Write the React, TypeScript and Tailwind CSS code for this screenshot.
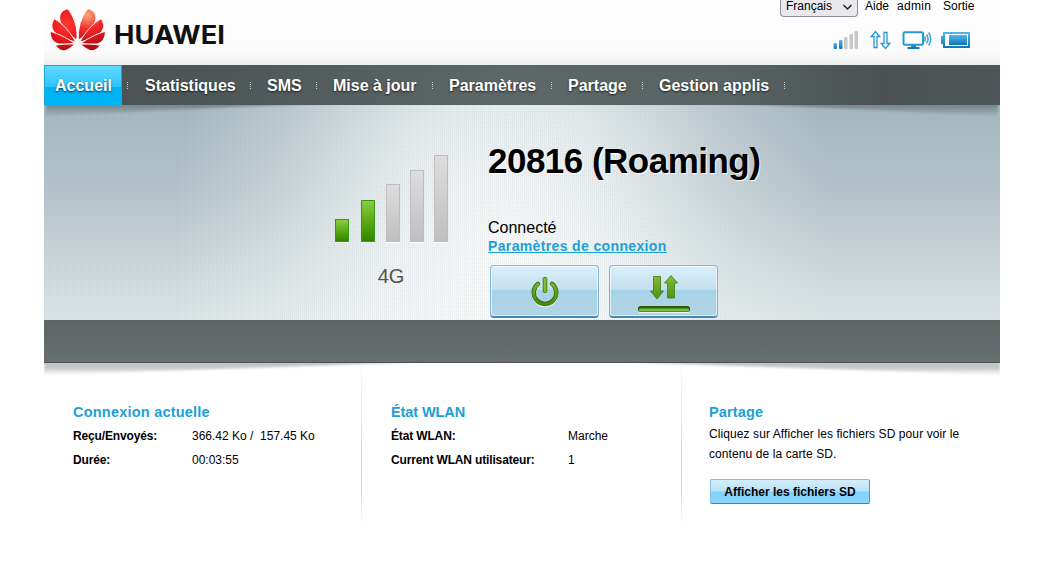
import { clsx } from "clsx";

const navItems = [
  { label: "Accueil", width: "w-[78px] pl-[10px]", active: true },
  { label: "Statistiques", width: "w-[128px] pl-[23px]" },
  { label: "SMS", width: "w-[66px] pl-[17px]" },
  { label: "Mise à jour", width: "w-[116px] pl-[17px]" },
  { label: "Paramètres", width: "w-[119px] pl-[17px]" },
  { label: "Partage", width: "w-[91px] pl-[17px]" },
  { label: "Gestion applis", width: "w-[142px] pl-[17px]" },
];

const LogoPetals = () => (
  <>
    <path d="M26.600 33C28.600 24 24 8 17.500 1.800C12 3.200 9.200 7 9.700 12C10.300 19 20 28 26.600 33Z" />
    <path d="M25.800 35C20.500 25.500 12 15.500 4.200 11.800C0.800 17 1.200 22.500 5.500 26.200C11 30.700 19 33.500 25.800 35Z" />
    <path d="M24.800 36.400C17 31 8 26.500 0.200 24.300C0 31 3.300 36 9 36.900C14 37.400 20 36.900 24.800 36.400Z" />
    <path d="M24.800 37.200C18 36.800 10 37.300 5.300 38.300C8.500 42.700 12.500 44.700 16 43.300C19 41.900 22.300 39.600 24.800 37.200Z" />
  </>
);

const Logo = () => (
  <svg width="180" height="46" viewBox="0 0 180 46" role="img" aria-label="HUAWEI">
    <defs>
      <radialGradient id="petal" gradientUnits="userSpaceOnUse" cx="17" cy="17" r="28">
        <stop offset="0" stopColor="#ff3a30" />
        <stop offset="0.5" stopColor="#f01c20" />
        <stop offset="1" stopColor="#a80c12" />
      </radialGradient>
      <radialGradient id="petalLight" gradientUnits="userSpaceOnUse" cx="18" cy="8" r="32">
        <stop offset="0" stopColor="#ffa877" />
        <stop offset="0.45" stopColor="#f5292a" />
        <stop offset="1" stopColor="#b00c12" />
      </radialGradient>
    </defs>
    <g fill="url(#petal)" stroke="#fff" strokeWidth="0.900">
      <LogoPetals />
    </g>
    <g fill="url(#petalLight)" stroke="#fff" strokeWidth="0.900" transform="translate(55.5 0) scale(-1 1)">
      <LogoPetals />
    </g>
    <text
      x="64"
      y="36.500"
      fontFamily="Inter, 'Liberation Sans', sans-serif"
      fontSize="25"
      fontWeight="700"
      fill="#111"
      textLength="111"
      lengthAdjust="spacingAndGlyphs"
    >
      HUAWEI
    </text>
  </svg>
);

// Small status icons on the right of the header
const StatusIcons = () => (
  <div className="flex h-[20px]">
    <svg width="26" height="20" className="mr-[11px]">
      <defs>
        <linearGradient id="blue" x1="0" y1="0" x2="0" y2="1">
          <stop offset="0" stopColor="#50b9ee" />
          <stop offset="1" stopColor="#1275b3" />
        </linearGradient>
      </defs>
      <rect x="0.500" y="13" width="3.500" height="6" rx="1" fill="url(#blue)" />
      <rect x="6" y="10" width="3.500" height="9" rx="1" fill="url(#blue)" />
      <rect x="11" y="7" width="3.500" height="12" rx="1" fill="#c8c8c8" />
      <rect x="16.500" y="4" width="3.500" height="15" rx="1" fill="#c8c8c8" />
      <rect x="21.500" y="1" width="3.500" height="18" rx="1" fill="#c8c8c8" />
    </svg>
    <svg width="21" height="20" className="mr-[11px]" fill="none" stroke="#2199d5" strokeWidth="1.300">
      <path d="M4 17.500V6.500H1.300L5.500 1.500L9.700 6.500H7V17.500Z" />
      <path d="M14 2.500V13.500H11.300L15.500 18.500L19.700 13.500H17V2.500Z" />
    </svg>
    <svg width="30" height="20" className="mr-[8px]">
      <rect x="1.500" y="2.200" width="19.500" height="12.600" rx="1.500" fill="#fff" stroke="#2697d3" strokeWidth="2" />
      <path d="M9 15.500H14V17H17.500V19H5.500V17H9Z" fill="#1779b5" />
      <path d="M22.500 6.500Q24 9 22.500 11.500M24.500 4.500Q27.500 9 24.500 13.500M26.700 2.500Q30.700 9 26.700 15.500" fill="none" stroke="#4aa8d8" strokeWidth="1.600" />
    </svg>
    <svg width="30" height="20">
      <path d="M3.500 2H29.500Q30 2 30 2.500V17.500Q30 18 29.500 18H3.500Q3 18 3 17.500V14H1.500Q1 14 1 13.500V6.500Q1 6 1.500 6H3V2.500Q3 2 3.500 2Z" fill="url(#blue)" />
      <rect x="5" y="4" width="23" height="12" fill="#fff" />
      <rect x="9" y="5" width="18" height="10" fill="url(#blue)" />
    </svg>
  </div>
);

const signalBars = [
  { size: "h-[23px] w-[14px] mr-[12px]", on: true },
  { size: "h-[42px] w-[14px] mr-[11px]", on: true },
  { size: "h-[58px] w-[14px] mr-[10px]", on: false },
  { size: "h-[72px] w-[14px] mr-[10px]", on: false },
  { size: "h-[87px] w-[14px]", on: false },
];

const PowerIcon = () => (
  <svg width="30" height="32" viewBox="0 0 30 32">
    <defs>
      <linearGradient id="green" gradientUnits="userSpaceOnUse" x1="0" y1="0" x2="0" y2="32">
        <stop offset="0" stopColor="#89bf3c" />
        <stop offset="1" stopColor="#3d8405" />
      </linearGradient>
    </defs>
    <path d="M8 8A11.300 11.300 0 1 0 22 8" fill="none" stroke="#edf6fa" strokeWidth="4" strokeLinecap="round" transform="translate(0 1)" />
    <path d="M8 7.800A11.300 11.300 0 1 0 22 7.800" fill="none" stroke="#306f09" strokeWidth="4.400" strokeLinecap="round" />
    <path d="M8 8.100A11.300 11.300 0 1 0 22 8.100" fill="none" stroke="url(#green)" strokeWidth="2.800" strokeLinecap="round" />
    <rect x="13.200" y="1.500" width="3.600" height="15" rx="1" fill="#82b93a" stroke="#3f850c" />
  </svg>
);

const TrafficIcon = () => (
  <svg width="54" height="40" viewBox="0 0 54 40">
    <g fill="url(#green)" stroke="#39800c" strokeWidth="0.800">
      <path d="M16.500 2.500H23.500V17H26.500L20 25L13.500 17H16.500Z" />
      <path d="M30.500 24V9H27.500L34 1.500L40.500 9H37.500V24Z" />
    </g>
    <rect x="1" y="33" width="52" height="6" rx="2.500" fill="#eaf5fa" />
    <rect x="1" y="32" width="52" height="6" rx="2.500" fill="#2e5d0c" />
    <rect x="2" y="34.500" width="50" height="3" rx="1.500" fill="#78c240" />
  </svg>
);

const bigButton =
  "flex justify-center h-[53px] w-[109px] rounded-[4px] border border-[#83b6d9] border-b-2 border-b-[#4389bd] bg-[linear-gradient(to_bottom,#d9effb_0%,#c5deed_48%,#a6d3e9_49%,#b3d4e3_100%)] shadow-[inset_0_0_0_1px_rgba(255,255,255,0.6)]";

const Row = ({ label, value, labelWidth }: { label: string; value: string; labelWidth: string }) => (
  <div className="flex h-[24px] items-center whitespace-pre">
    <div className={clsx("shrink-0 font-bold tracking-[-0.150px]", labelWidth)}>{label}</div>
    <div>{value}</div>
  </div>
);

const Divider = () => (
  <div className="h-[160px] w-px shrink-0 bg-[linear-gradient(to_bottom,#f8f8f8,#dcdcdc_50%,#d8d8d8_80%,#fff)]" />
);

const App = () => {
  return (
    <div className="h-[570px] overflow-hidden bg-white font-['Liberation_Sans',Arial,sans-serif] text-black">
      <div className="ml-[44px] w-[956px]">
        {/* Header */}
        <header className="flex h-[65px] justify-between bg-[linear-gradient(to_bottom,#fff_0%,#fbfbfb_80%,#eeeeee_100%)]">
          <div className="pl-[5.500px] pt-[7px]">
            <Logo />
          </div>
          <div className="flex w-[220px] flex-col">
            <div className="flex h-[17px] text-[12px] leading-[13px]">
              <button className="mr-[7px] flex h-[17px] w-[78px] rounded-b-[4px] border border-t-0 border-[#8f8f9d] bg-[#e9e9ed] pl-[5px]">
                <span className="w-[57px] text-left">Français</span>
                <svg width="9" height="14" fill="none" stroke="#222" strokeWidth="1.500">
                  <path d="M0.500 5L4.500 9L8.500 5" />
                </svg>
              </button>
              <a className="w-[32px]">Aide</a>
              <a className="w-[46px] tracking-[0.300px]">admin</a>
              <a>Sortie</a>
            </div>
            <div className="pl-[53px] pt-[13px]">
              <StatusIcons />
            </div>
          </div>
        </header>

        {/* Navigation */}
        <nav className="flex h-[40px] bg-[linear-gradient(to_right,#4c5254_0%,#4d5557_15%,#5d6767_48%,#586363_72%,#4b5152_88%,#4e5658_100%)] text-[16px] font-bold text-white">
          {navItems.map((item) => (
            <div key={item.label} className="flex items-center">
              <a
                className={clsx(
                  "flex h-[40px] items-center whitespace-nowrap [text-shadow:0_1px_2px_rgba(0,0,0,0.7)]",
                  item.width,
                  item.active
                    ? "border border-b-0 border-[#1aa5d9] bg-[linear-gradient(to_bottom,#60d8ff_0%,#2fc4fb_53%,#00b1f5_54%,#00b5f9_100%)]"
                    : "pt-px"
                )}
              >
                {item.label}
              </a>
              {item.active ? (
                <span className="-mr-[6px] ml-[5px] h-[7px] w-px bg-[repeating-linear-gradient(to_bottom,#ccd0d0_0_1px,transparent_1px_2px)]" />
              ) : (
                <span className="-mr-px h-[7px] w-px bg-[repeating-linear-gradient(to_bottom,#ccd0d0_0_1px,transparent_1px_2px)]" />
              )}
            </div>
          ))}
        </nav>

        {/* Connection status */}
        <section className="relative flex h-[215px] bg-[radial-gradient(ellipse_330px_480px_at_48%_70%,rgba(255,255,255,0.95)_0%,rgba(255,255,255,0.74)_35%,rgba(255,255,255,0.25)_72%,transparent_100%),linear-gradient(to_bottom,#a7bbc1_0%,#b7c7cc_40%,#e1e8ea_100%)]">
          <div className="absolute inset-0 bg-[repeating-linear-gradient(to_right,rgba(70,100,110,0.045)_0_1px,transparent_1px_2px),repeating-linear-gradient(to_bottom,rgba(70,100,110,0.045)_0_1px,transparent_1px_2px)]" />
          <svg className="absolute left-0 top-0" width="956" height="14">
            <defs>
              <linearGradient id="drop" x1="0" y1="0" x2="0" y2="1">
                <stop offset="0" stopColor="#3c4648" stopOpacity="0.500" />
                <stop offset="1" stopColor="#3c4648" stopOpacity="0.050" />
              </linearGradient>
              <filter id="soft" x="-5%" y="-20%" width="110%" height="140%">
                <feGaussianBlur stdDeviation="1" />
              </filter>
            </defs>
            <path d="M2 -2H280L2 11ZM954 -2H676L954 11Z" fill="url(#drop)" filter="url(#soft)" />
          </svg>
          <div className="relative ml-[291px] w-[153px]">
            <div className="flex h-[137px] items-end">
              {signalBars.map((bar, i) => (
                <div
                  key={i}
                  className={clsx(
                    "border shadow-[0_1px_0_#fff]",
                    bar.size,
                    bar.on
                      ? "border-[#36961b] bg-[linear-gradient(to_bottom,#8bcb40,#429600_80%,#328200)]"
                      : "border-[#bdbdbd] bg-[linear-gradient(to_bottom,#dddddd,#bfbfbf)]"
                  )}
                />
              ))}
            </div>
            <div className="w-[112px] pt-[22px] text-center text-[20px] leading-[24px] text-[#555]">4G</div>
          </div>
          <div className="relative">
            <h1 className="pt-[35px] text-[35px] font-bold leading-[42px] tracking-[-0.520px] [text-shadow:1px_1px_1px_#fff]">
              20816 (Roaming)
            </h1>
            <div className="pt-[36px] text-[16px] leading-[19px]">Connecté</div>
            <a className="block text-[14px] font-bold leading-[18px] tracking-[0.360px] text-[#1ba1d6] underline">
              Paramètres de connexion
            </a>
            <div className="flex gap-[10px] pl-[2px] pt-[10px]">
              <button className={clsx(bigButton, "pt-[10px]")}>
                <PowerIcon />
              </button>
              <button className={clsx(bigButton, "pt-[8px]")}>
                <TrafficIcon />
              </button>
            </div>
          </div>
        </section>

        <div className="h-[43px] border-b border-[#4b5153] bg-[linear-gradient(to_bottom,#5c6464,#696f71)]" />
        <svg className="block" width="956" height="13">
          <defs>
            <linearGradient id="barShadow" x1="0" y1="0" x2="0" y2="1">
              <stop offset="0" stopColor="#bdbdbd" />
              <stop offset="0.500" stopColor="#cccccc" />
              <stop offset="1" stopColor="#fff" />
            </linearGradient>
          </defs>
          <path d="M0 -1H380L0 12ZM956 -1H576L956 12Z" fill="url(#barShadow)" filter="url(#soft)" />
        </svg>

        {/* Details */}
        <section className="-mt-[10px] flex text-[12px]">
          <div className="w-[317px] pl-[29px] pt-[37px]">
            <h2 className="mb-[2px] text-[14.500px] font-bold leading-[19px] tracking-[0.220px] text-[#1ba1d6]">Connexion actuelle</h2>
            <Row label="Reçu/Envoyés:" value="366.42 Ko /  157.45 Ko" labelWidth="w-[119px]" />
            <Row label="Durée:" value="00:03:55" labelWidth="w-[119px]" />
          </div>
          <Divider />
          <div className="w-[319px] pl-[29px] pt-[37px]">
            <h2 className="mb-[2px] text-[14.500px] font-bold leading-[19px] tracking-[-0.100px] text-[#1ba1d6]">État WLAN</h2>
            <Row label="État WLAN:" value="Marche" labelWidth="w-[177px]" />
            <Row label="Current WLAN utilisateur:" value="1" labelWidth="w-[177px]" />
          </div>
          <Divider />
          <div className="w-[318px] pl-[27px] pt-[37px]">
            <h2 className="mb-[2px] text-[14.500px] font-bold leading-[19px] tracking-[0.150px] text-[#1ba1d6]">Partage</h2>
            <p className="w-[265px] leading-[20px] tracking-[0.090px]">
              Cliquez sur Afficher les fichiers SD pour voir le contenu de la carte SD.
            </p>
            <button className="ml-px mt-[15px] h-[25px] w-[160px] whitespace-nowrap rounded-[2px] border border-[#8bbddd] border-b-[#3d83b3] border-r-[#5594c0] bg-[linear-gradient(to_bottom,#d4edfb_0%,#b9e2f8_48%,#83d2fb_52%,#86d6ff_100%)] text-[12px] font-bold">
              Afficher les fichiers SD
            </button>
          </div>
        </section>
      </div>
    </div>
  );
};

export default App;
